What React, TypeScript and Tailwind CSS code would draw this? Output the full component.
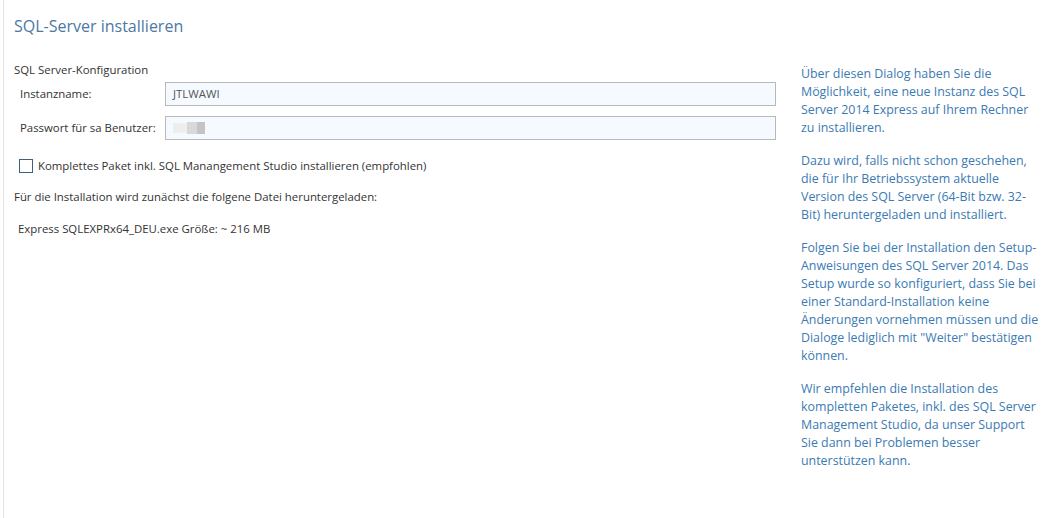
import React from 'react';

const infoParagraphs: string[][] = [
  [
    'Über diesen Dialog haben Sie die',
    'Möglichkeit, eine neue Instanz des SQL',
    'Server 2014 Express auf Ihrem Rechner',
    'zu installieren.',
  ],
  [
    'Dazu wird, falls nicht schon geschehen,',
    'die für Ihr Betriebssystem aktuelle',
    'Version des SQL Server (64-Bit bzw. 32-',
    'Bit) heruntergeladen und installiert.',
  ],
  [
    'Folgen Sie bei der Installation den Setup-',
    'Anweisungen des SQL Server 2014. Das',
    'Setup wurde so konfiguriert, dass Sie bei',
    'einer Standard-Installation keine',
    'Änderungen vornehmen müssen und die',
    'Dialoge lediglich mit "Weiter" bestätigen',
    'können.',
  ],
  [
    'Wir empfehlen die Installation des',
    'kompletten Paketes, inkl. des SQL Server',
    'Management Studio, da unser Support',
    'Sie dann bei Problemen besser',
    'unterstützen kann.',
  ],
];

const Field = ({ label, children }: { label: string; children: React.ReactNode }) => (
  <div className="flex items-center">
    <label className="w-[151px] pl-[6px] shrink-0">{label}</label>
    <div className="flex-1 h-[24px] border border-[#b9b9b9] bg-[#f4faff] flex items-center px-[7px]">
      {children}
    </div>
  </div>
);

const App = () => {
  return (
    <div
      className="w-[1043px] h-[518px] bg-white text-[11.4px] text-[#333333] overflow-hidden"
      style={{ fontFamily: '"Open Sans", "Noto Sans", sans-serif' }}
    >
      <div className="ml-[3px] h-full border-l border-[#e3e3e3] flex">
        <div className="w-[772px] pl-[10px] shrink-0">
          <h1 className="text-[16px] text-[#4d78a4] mt-[14px] leading-[24px]">SQL-Server installieren</h1>

          <div className="mt-[24px] leading-[16px]">SQL Server-Konfiguration</div>

          <div className="mt-[4px] flex flex-col gap-[10px]">
            <Field label="Instanzname:">
              <span className="text-[#555]">JTLWAWI</span>
            </Field>
            <Field label="Passwort für sa Benutzer:">
              <span className="flex items-center">
                <span className="w-[14px] h-[10px] bg-[#eeeeee]" />
                <span className="w-[10px] h-[12px] bg-[#d8d8d8]" />
                <span className="w-[8px] h-[12px] bg-[#c4c4c4]" />
              </span>
            </Field>
          </div>

          <label className="mt-[18px] ml-[5px] h-[16px] flex items-center gap-[5px]">
            <span className="w-[14px] h-[14px] border border-[#3f5f7e] bg-white" />
            <span>Komplettes Paket inkl. SQL Manangement Studio installieren (empfohlen)</span>
          </label>

          <p className="mt-[15px] leading-[16px]">
            Für die Installation wird zunächst die folgene Datei heruntergeladen:
          </p>

          <p className="mt-[16px] ml-[4px] leading-[16px]">Express SQLEXPRx64_DEU.exe Größe: ~ 216 MB</p>
        </div>

        <div className="ml-[25px] pt-[65px] text-[12.4px] leading-[18px] text-[#3b7ab3] flex flex-col gap-[15px]">
          {infoParagraphs.map((lines, i) => (
            <p key={i}>
              {lines.map((line, j) => (
                <span key={j} className="block whitespace-nowrap">
                  {line}
                </span>
              ))}
            </p>
          ))}
        </div>
      </div>
    </div>
  );
};

export default App;
